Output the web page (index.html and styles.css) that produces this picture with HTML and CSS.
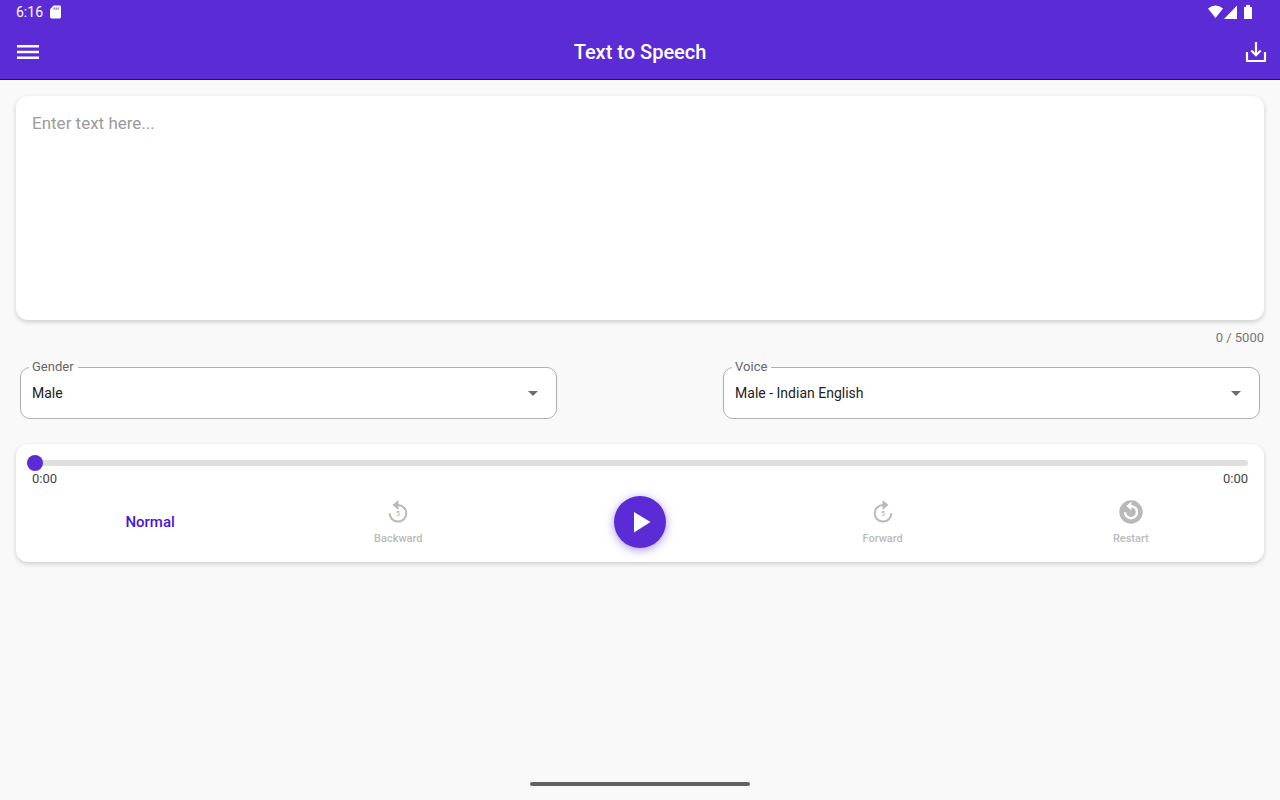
FILE: index.html
```html
<!DOCTYPE html>
<html lang="en">
<head>
<meta charset="utf-8">
<meta name="viewport" content="width=device-width, initial-scale=1">
<title>Text to Speech</title>
<link rel="stylesheet" href="styles.css">
</head>
<body>
<header class="top">
  <div class="status">
    <span class="status-side"><span>6:16</span>
      <svg class="sd" viewBox="0 0 12 14" aria-hidden="true"><path fill="#fff" d="M4 0h6.500Q12 0 12 1.500v11Q12 14 10.500 14h-9Q0 14 0 12.500V4z"/><path stroke="#5b2bd5" d="M4.500 2v2.500M6.700 2v2.500M8.900 2v2.500"/></svg>
    </span>
    <svg class="signals" viewBox="0 0 45 14" aria-hidden="true"><path fill="#fff" d="M0 3.500Q7.500-2.500 15 3.500L7.500 13zM29 .5V14H16zM36 2h2V0h4v2h1.500q.5 0 .5.500v11q0 .5-.5.500h-7q-.5 0-.5-.5z"/></svg>
  </div>
  <div class="appbar">
    <button class="icon-button menu" aria-label="Menu"><svg width="24" height="24" viewBox="0 0 24 24"><path stroke="#fff" stroke-width="2.600" d="M1 6.200h22M1 12h22M1 17.800h22"/></svg></button>
    <h1>Text to Speech</h1>
    <button class="icon-button" aria-label="Download"><svg width="24" height="24" viewBox="0 0 24 24" fill="none" stroke="#fff" stroke-width="2.200"><path stroke-linejoin="round" d="M3 12v9h18v-9"/><path d="M12 2v13M7.300 10.500l4.700 4.700 4.700-4.700"/></svg></button>
  </div>
</header>
<main>
  <textarea class="card editor" placeholder="Enter text here..." aria-label="Text"></textarea>
  <p class="counter">0 / 5000</p>
  <div class="fields">
    <fieldset class="field">
      <legend><label for="gender">Gender</label></legend>
      <div class="picker">
        <select id="gender"><option>Male</option></select>
        <svg class="arrow" viewBox="0 0 10 5" aria-hidden="true"><path fill="#6d6d6d" d="M0 0h10L5 5z"/></svg>
      </div>
    </fieldset>
    <fieldset class="field">
      <legend><label for="voice">Voice</label></legend>
      <div class="picker">
        <select id="voice"><option>Male - Indian English</option></select>
        <svg class="arrow" viewBox="0 0 10 5" aria-hidden="true"><path fill="#6d6d6d" d="M0 0h10L5 5z"/></svg>
      </div>
    </fieldset>
  </div>
  <section class="card player">
    <input class="seek" type="range" min="0" max="100" value="0" aria-label="Position">
    <div class="times"><span>0:00</span><span>0:00</span></div>
    <div class="controls">
      <button class="speed">Normal</button>
      <button class="control wide">
        <svg width="24" height="24" viewBox="0 0 24 24"><path fill="none" stroke="#b9b9b9" stroke-width="2" d="M12 5a8.300 8.300 0 1 1-8.300 8.300"/><path fill="#b9b9b9" d="M12.500 0v10L6.500 5z"/><text x="12" y="16" text-anchor="middle">5</text></svg>
        <span>Backward</span>
      </button>
      <button class="play" aria-label="Play"><svg width="52" height="52" viewBox="0 0 52 52"><path fill="#fff" d="M20 16v20.500L36.500 26z"/></svg></button>
      <button class="control wide">
        <svg width="24" height="24" viewBox="0 0 24 24"><path fill="none" stroke="#b9b9b9" stroke-width="2" d="M12 5a8.300 8.300 0 1 0 8.300 8.300"/><path fill="#b9b9b9" d="M11.500 0v10L17.500 5z"/><text x="12" y="16" text-anchor="middle">5</text></svg>
        <span>Forward</span>
      </button>
      <button class="control">
        <svg width="24" height="24" viewBox="0 0 24 24"><circle cx="12" cy="12" r="11.700" fill="#b9b9b9"/><path fill="none" stroke="#fff" stroke-width="2.400" d="M11 6.200h1a6 6 0 1 1-6 6"/><path fill="#fff" d="M12.300 1.700v8.800L7.300 6.100z"/></svg>
        <span>Restart</span>
      </button>
    </div>
  </section>
</main>
<div class="home-bar"></div>
</body>
</html>
```
FILE: styles.css
```css
* { box-sizing: border-box; }
body {
  margin: 0;
  min-height: 100vh;
  display: flex;
  flex-direction: column;
  background: #f9f9f9;
  color: #212121;
  font: 14px/20px Roboto, sans-serif;
}
button, select, textarea { font: inherit; color: inherit; }
button { background: none; border: 0; padding: 0; cursor: pointer; }
svg { display: block; }

.top { background: #5b2bd5; color: #fff; border-bottom: 1px solid #1a00b8; }
.status { display: flex; justify-content: space-between; align-items: center; height: 24px; padding: 0 27px 0 16px; }
.status-side { display: flex; align-items: center; gap: 7px; }
.sd { width: 11px; height: 14px; }
.signals { width: 45px; height: 14px; }
.appbar { display: grid; grid-template-columns: 1fr auto 1fr; align-items: center; height: 55px; padding: 0 12px; }
.icon-button { width: 24px; height: 24px; justify-self: end; }
.menu { width: 32px; padding: 0 4px; justify-self: start; }
h1 { margin: 0; font-size: 20px; line-height: 24px; font-weight: 500; }

main { flex: 1; padding: 16px; }
.card { background: #fff; border-radius: 12px; box-shadow: 0 2px 5px rgba(0, 0, 0, .18); }
.editor { display: block; width: 100%; height: 224px; border: 0; padding: 16px; resize: none; outline: 0; font-size: 17px; line-height: 22px; }
.editor::placeholder { color: #9b9b9b; opacity: 1; }
.counter { margin: 8px 0 11px; text-align: right; font-size: 13px; color: #777; }

.fields { display: flex; justify-content: space-between; gap: 13.4%; padding: 0 4px; }
.field { flex: 1; min-width: 0; margin: 0; padding: 0 0 0 8px; border: 1px solid #b0b0b0; border-radius: 10px; background: #fff; }
legend { padding: 0 4px 0 3px; font-size: 13px; line-height: 16px; color: #666; }
.picker { position: relative; height: 43px; }
.picker select { width: 100%; height: 36px; padding: 0 40px 0 3px; border: 0; outline: 0; background: transparent; appearance: none; }
.arrow { position: absolute; right: 18px; top: 16px; width: 10px; height: 5px; pointer-events: none; }

.player { margin-top: 25px; padding: 11px 16px 14px; }
.seek { display: block; width: calc(100% + 5px); height: 16px; margin: 0 0 0 -5px; appearance: none; background: transparent; }
.seek::-webkit-slider-runnable-track { height: 6px; border-radius: 3px; background: #dfdfdf; }
.seek::-webkit-slider-thumb { appearance: none; width: 16px; height: 16px; margin-top: -5px; border-radius: 50%; background: #5b2bd5; }
.times { display: flex; justify-content: space-between; font-size: 13px; line-height: 16px; color: #444; }
.controls { display: flex; justify-content: space-around; align-items: center; margin-top: 9px; padding-left: 1px; }
.speed { width: 64px; font-size: 15px; font-weight: 500; color: #4a14dc; }
.control { width: 64px; padding-top: 3px; display: flex; flex-direction: column; align-items: center; gap: 7px; color: #bbb; font-size: 11px; line-height: 16px; font-weight: 500; }
.wide { width: 92px; }
.control text { fill: #b9b9b9; font-size: 7px; }
.play { width: 52px; height: 52px; border-radius: 50%; background: #5b2bd5; box-shadow: 0 2px 10px rgba(91, 43, 213, .5); }

.home-bar { width: 220px; height: 4px; margin: 0 auto 14px; border-radius: 2px; background: #606060; }
```
